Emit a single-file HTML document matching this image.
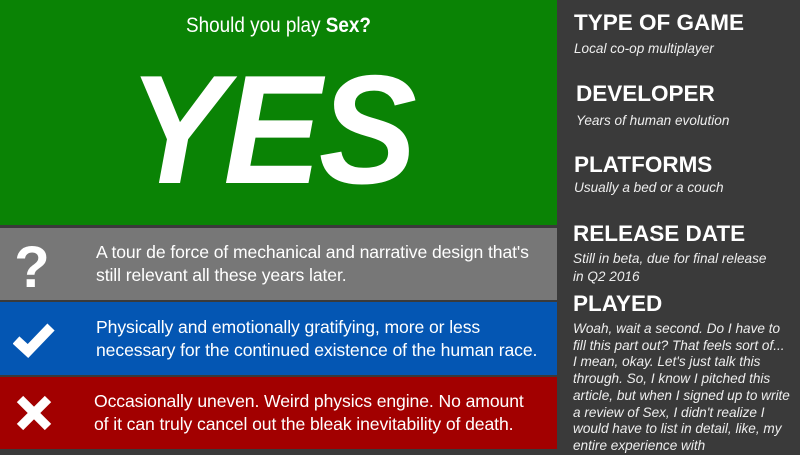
<!DOCTYPE html>
<html><head><style>
body{margin:0;width:800px;height:449px;overflow:hidden;background:#3a3a3a;font-family:"Liberation Sans",sans-serif;position:relative}
.b{position:absolute;left:0;width:557px;color:#fff}
.g{top:0;height:225px;background:#0a8305}
.q{top:228px;height:72px;background:#777}
.bl{top:302px;height:73px;background:#0456b3}
.r{top:377px;height:72px;background:#a20000}
.sub{position:absolute;top:14px;left:0;width:557px;text-align:center;font-size:21px;font-family:"Liberation Sans Narrow","Liberation Sans",sans-serif;transform:scaleX(0.9)}
.yes{position:absolute;top:52px;left:128px;font-size:155px;font-weight:bold;font-style:italic;transform:scaleX(0.95);transform-origin:left;line-height:1;letter-spacing:-3px}
.t{position:absolute;left:96px;font-size:17.6px;line-height:23px;letter-spacing:-0.1px}
.ic{position:absolute;left:14px;width:40px;text-align:center;font-weight:bold}
.s{position:absolute;left:574px;color:#fff}
.h{font-size:22.5px;font-weight:bold}
.i{font-size:13.6px;font-style:italic;color:#eee;line-height:18px}
</style></head><body>
<div class="b g"><div class="sub">Should you play <b>Sex?</b></div><div class="yes">YES</div></div>
<div class="b q"><div class="ic" style="top:6px;font-size:58px;left:12px">?</div><div class="t" style="top:13px">A tour de force of mechanical and narrative design that's<br>still relevant all these years later.</div></div>
<div class="b bl"><svg style="position:absolute;left:13px;top:20px" width="42" height="36" viewBox="0 0 42 36"><path d="M3 18 L15 29 L38 5" stroke="#fff" stroke-width="10" fill="none"/></svg><div class="t" style="top:14px">Physically and emotionally gratifying, more or less<br>necessary for the continued existence of the human race.</div></div>
<div class="b r"><svg style="position:absolute;left:16px;top:18px" width="36" height="36" viewBox="0 0 36 36"><path d="M4 4 L32 32 M32 4 L4 32" stroke="#fff" stroke-width="9"/></svg><div class="t" style="top:13px;left:94px">Occasionally uneven. Weird physics engine. No amount<br>of it can truly cancel out the bleak inevitability of death.</div></div>
<div class="s" style="top:10px"><div class="h">TYPE OF GAME</div><div class="i" style="margin-top:4px">Local co-op multiplayer</div></div>
<div class="s" style="top:81px;left:576px"><div class="h">DEVELOPER</div><div class="i" style="margin-top:5px">Years of human evolution</div></div>
<div class="s" style="top:152px"><div class="h">PLATFORMS</div><div class="i" style="margin-top:1px">Usually a bed or a couch</div></div>
<div class="s" style="top:221px;left:573px"><div class="h">RELEASE DATE</div><div class="i" style="margin-top:3px">Still in beta, due for final release<br>in Q2 2016</div></div>
<div class="s" style="top:291px;left:573px"><div class="h">PLAYED</div><div class="i" style="margin-top:4px;line-height:16.7px">Woah, wait a second. Do I have to<br>fill this part out? That feels sort of...<br>I mean, okay. Let's just talk this<br>through. So, I know I pitched this<br>article, but when I signed up to write<br>a review of Sex, I didn't realize I<br>would have to list in detail, like, my<br>entire experience with</div></div>
</body></html>
